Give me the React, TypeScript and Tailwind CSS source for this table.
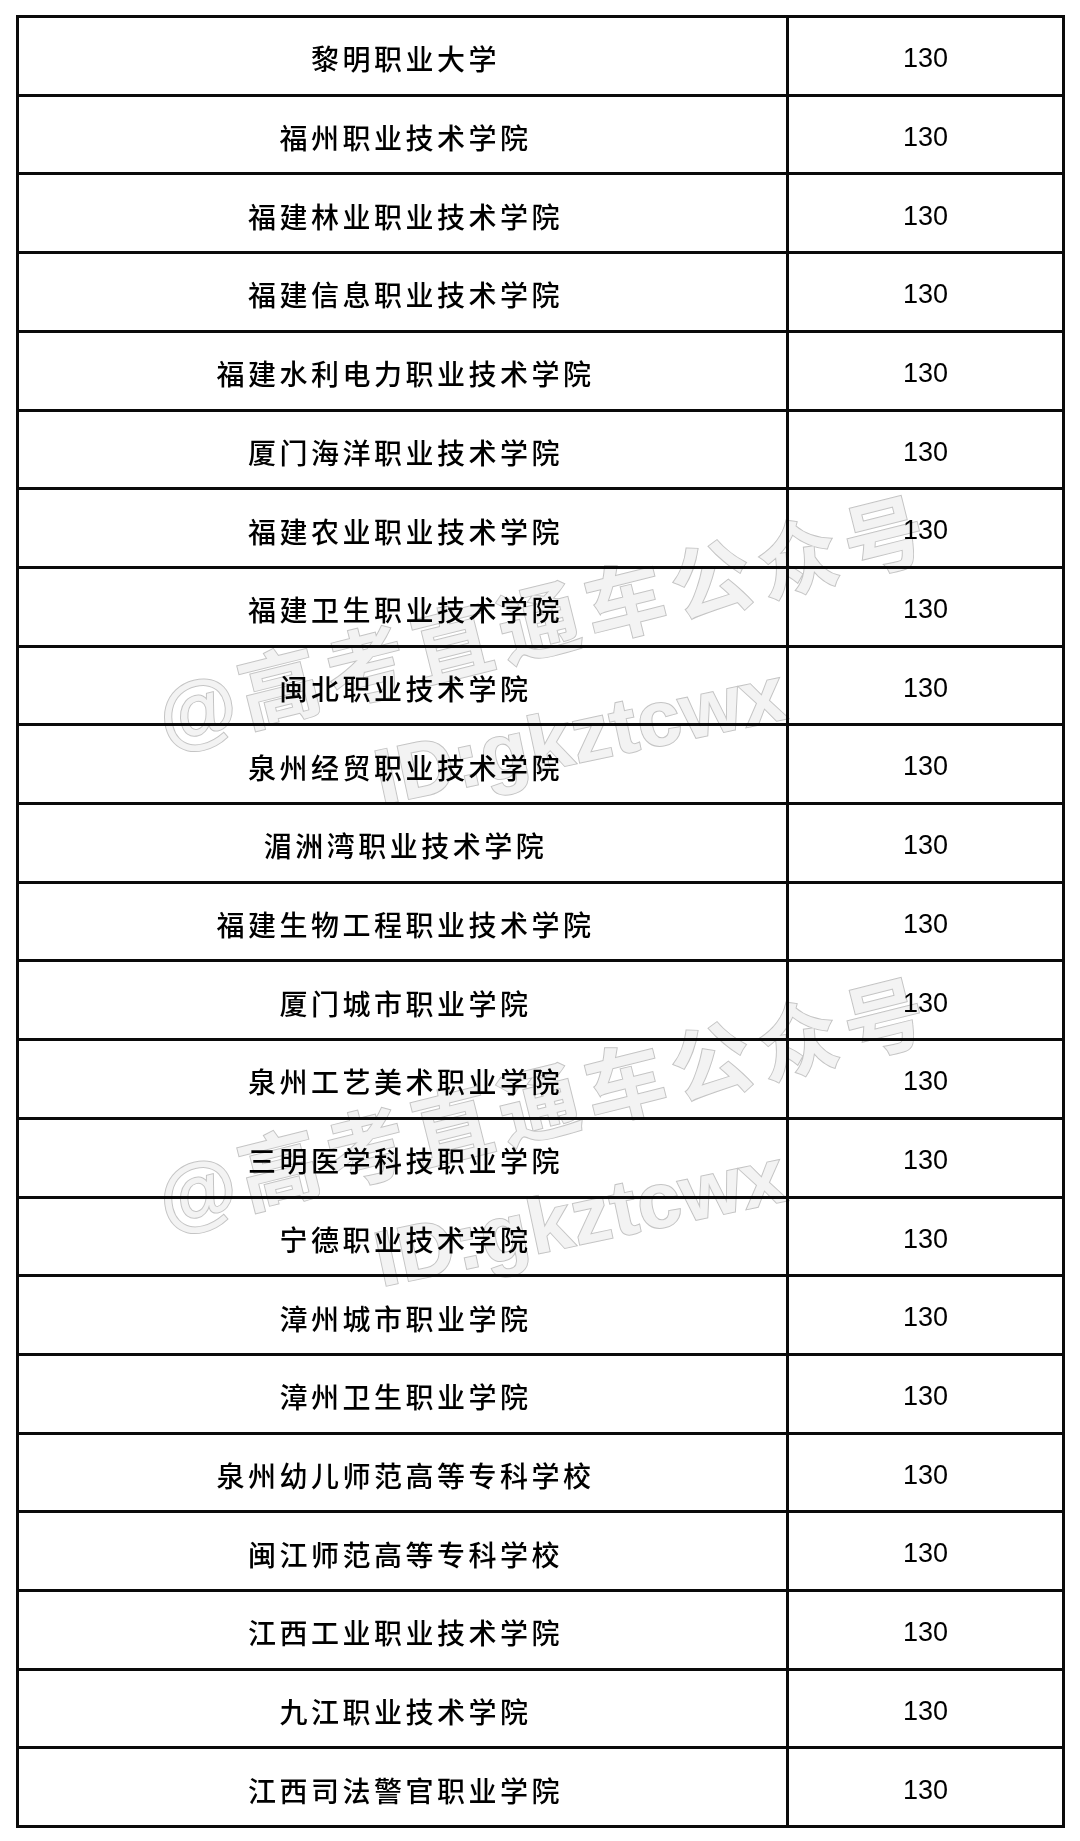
const schools = [
  '黎明职业大学',
  '福州职业技术学院',
  '福建林业职业技术学院',
  '福建信息职业技术学院',
  '福建水利电力职业技术学院',
  '厦门海洋职业技术学院',
  '福建农业职业技术学院',
  '福建卫生职业技术学院',
  '闽北职业技术学院',
  '泉州经贸职业技术学院',
  '湄洲湾职业技术学院',
  '福建生物工程职业技术学院',
  '厦门城市职业学院',
  '泉州工艺美术职业学院',
  '三明医学科技职业学院',
  '宁德职业技术学院',
  '漳州城市职业学院',
  '漳州卫生职业学院',
  '泉州幼儿师范高等专科学校',
  '闽江师范高等专科学校',
  '江西工业职业技术学院',
  '九江职业技术学院',
  '江西司法警官职业学院',
]

function Watermark({ top }: { top: number }) {
  return (
    <div className="pointer-events-none absolute left-0 w-[1080px] h-[300px] mix-blend-multiply" style={{ top }}>
      {/* account name */}
      <div className="absolute left-[545px] top-[120px] -translate-x-1/2 -translate-y-1/2 -rotate-[14deg] whitespace-nowrap font-['Noto_Sans_CJK_SC',sans-serif] text-[80px] font-bold leading-none tracking-[9px] text-[#f3f3f3] [-webkit-text-stroke:2px_#c4c4c4] [paint-order:stroke_fill]">
        <span className="tracking-[0px] pr-[6px] font-['Liberation_Sans_Narrow','Liberation_Sans',sans-serif]">@</span>高考直通车公众号
      </div>
      {/* account id */}
      <div className="absolute left-[580px] top-[235px] -translate-x-1/2 -translate-y-1/2 -rotate-[12deg] whitespace-nowrap font-['Liberation_Sans',sans-serif] text-[78px] font-bold leading-none tracking-[1px] text-[#f3f3f3] [-webkit-text-stroke:2px_#c4c4c4] [paint-order:stroke_fill]">
        ID:gkztcwx
      </div>
    </div>
  )
}

export default function App() {
  return (
    <div className="relative w-[1080px] h-[1841px] bg-white overflow-hidden">
      <div className="pt-[15px] pl-[16px]">
        <div className="flex h-[1813px] w-[1049px] flex-col border-[3px] border-[#0a0a0a]">
          {schools.map((name, i) => (
            <div
              key={name}
              className={`flex flex-1 ${i > 0 ? 'border-t-[3px] border-[#0a0a0a]' : ''}`}
            >
              <div className="flex w-[767px] items-center justify-center pt-[5px] pl-[6px] font-['Noto_Sans_CJK_SC',sans-serif] text-[28px] font-medium tracking-[3.5px] text-black">
                {name}
              </div>
              <div className="flex flex-1 items-center justify-center border-l-[3px] border-[#0a0a0a] pt-[5px] font-['Liberation_Sans',sans-serif] text-[27px] text-black">
                130
              </div>
            </div>
          ))}
        </div>
      </div>
      <Watermark top={500} />
      <Watermark top={982} />
    </div>
  )
}
